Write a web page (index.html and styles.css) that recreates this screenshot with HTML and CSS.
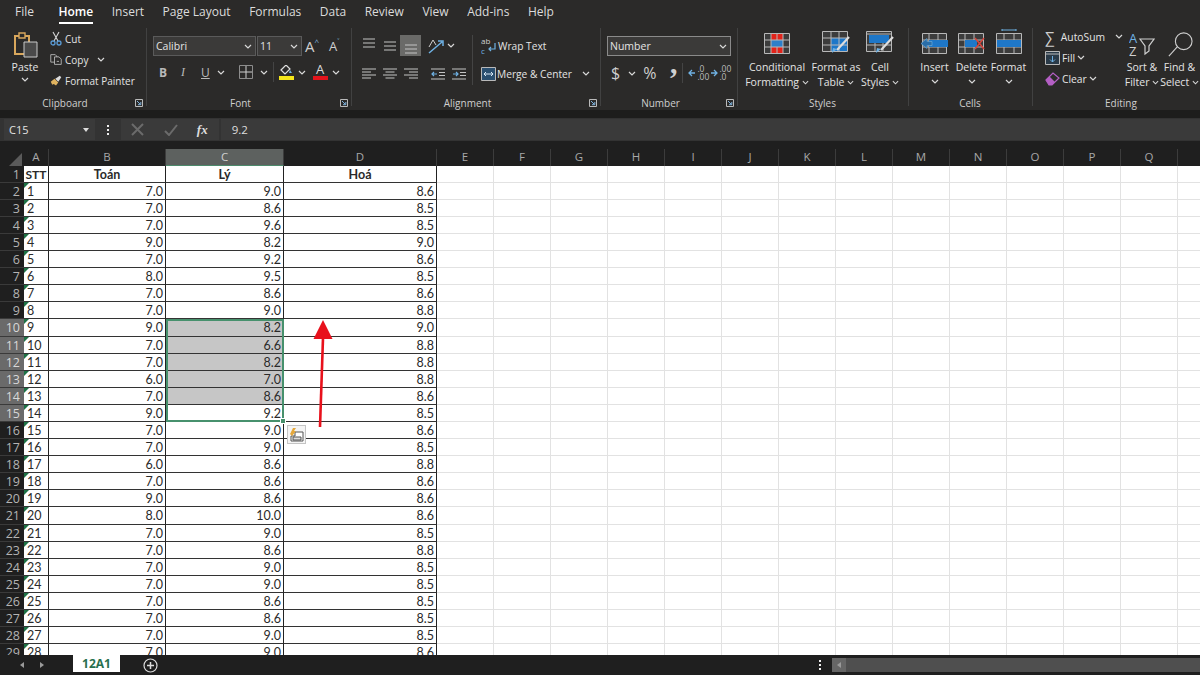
FILE: index.html
```html
<!DOCTYPE html>
<html lang="en">
<head>
  <meta charset="UTF-8">
  <title>Excel</title>
  <link rel="stylesheet" href="styles.css">
</head>
<body>
  <svg class="defs" width="0" height="0">
    <symbol id="chev" viewBox="0 0 8 5"><path d="M1 1l3 3 3-3" fill="none" stroke="#d8d8d8" stroke-width="1.2"/></symbol>
    <symbol id="launch" viewBox="0 0 8 8"><path d="M.5.5h7v7h-7z" fill="none" stroke="#bbb"/><path d="M2 2l3.5 3.5M3 5.7h2.8V3" fill="none" stroke="#7fb2dc"/></symbol>
    <symbol id="lines" viewBox="0 0 14 10"><path d="M1 1h12M1 5h12M1 9h12" stroke="#c4c4c4"/></symbol>
    <symbol id="left" viewBox="0 0 14 12"><path d="M0 1h14M0 4h9M0 7h14M0 10h9" stroke="#c4c4c4" stroke-width="1.100"/></symbol>
    <symbol id="center" viewBox="0 0 14 12"><path d="M0 1h14M2.500 4h9M0 7h14M2.500 10h9" stroke="#c4c4c4" stroke-width="1.100"/></symbol>
    <symbol id="right" viewBox="0 0 14 12"><path d="M0 1h14M5 4h9M0 7h14M5 10h9" stroke="#c4c4c4" stroke-width="1.100"/></symbol>
  </svg>

  <nav class="tabs">
    <span class="tab-file">File</span><span class="tab-active">Home</span><span>Insert</span><span>Page Layout</span><span>Formulas</span><span>Data</span><span>Review</span><span>View</span><span>Add-ins</span><span>Help</span>
  </nav>

  <section class="ribbon">
    <div class="group g-clipboard">
      <div class="group-body clip-body">
        <div class="paste">
          <svg width="25" height="26" viewBox="0 0 25 26"><path d="M2 4h14v18H2z" fill="#2b2a29" stroke="#d9a75c" stroke-width="2"/><path d="M6 1h6v5H6z" fill="#2b2a29" stroke="#d9a75c" stroke-width="1.400"/><path d="M11 10h13v15H11z" fill="#4a4a4a" stroke="#c9c9c9"/></svg>
          <span>Paste</span>
          <svg class="chev" width="8" height="5"><use href="#chev"/></svg>
        </div>
        <div class="clip-list">
          <div class="clip-row"><svg width="12" height="15" viewBox="0 0 12 15"><path d="M3 1l5 9M9 1l-5 9" stroke="#d5d5d5" stroke-width="1.100"/><circle cx="3" cy="12" r="2" fill="none" stroke="#5a9bd5" stroke-width="1.300"/><circle cx="9" cy="12" r="2" fill="none" stroke="#5a9bd5" stroke-width="1.300"/></svg><span>Cut</span></div>
          <div class="clip-row"><svg width="16" height="15" viewBox="0 0 16 15"><path d="M1 1h6l2 2v8H1z" fill="none" stroke="#cfcfcf"/><path d="M6 4h6l3 3v7H6z" fill="#2c2b2a" stroke="#cfcfcf"/><path d="M9 10h3" stroke="#cfcfcf"/></svg><span>Copy</span><svg class="chev copy-chev" width="8" height="5"><use href="#chev"/></svg></div>
          <div class="clip-row"><svg width="16" height="15" viewBox="0 0 16 15"><path d="M1 9l5-4 5 5-3 4-3-2-2 1z" fill="#e0b35f"/><path d="M7 5l4 4 4-6-2-2z" fill="#ddd"/></svg><span>Format Painter</span></div>
        </div>
      </div>
      <div class="group-label has-launcher">Clipboard<svg class="launcher" width="8" height="8"><use href="#launch"/></svg></div>
    </div>

    <div class="group g-font">
      <div class="group-body stack">
        <div class="tool-row font-top">
          <div class="combo combo-font"><span>Calibri</span><svg width="8" height="5"><use href="#chev"/></svg></div>
          <div class="combo combo-size"><span>11</span><svg width="8" height="5"><use href="#chev"/></svg></div>
          <span class="grow">A<small>^</small></span>
          <span class="shrink">A<small>˅</small></span>
        </div>
        <div class="tool-row font-bottom">
          <b class="ico-b">B</b>
          <i class="ico-i">I</i>
          <u class="ico-u">U</u>
          <svg class="chev-a" width="8" height="5"><use href="#chev"/></svg>
          <svg class="ico-border" width="14" height="14" viewBox="0 0 14 14"><path d="M.5.5h13v13H.5z" fill="none" stroke="#8d8d8d"/><path d="M7 1v12M1 7h12" stroke="#cfcfcf"/></svg>
          <svg class="chev-a" width="8" height="5"><use href="#chev"/></svg>
          <span class="sep sep-font"></span>
          <span class="color-btn">
            <svg width="16" height="10" viewBox="0 0 16 10"><path d="M3 5l5-5 4 4-5 5z" fill="none" stroke="#ddd" stroke-width="1.200"/><path d="M12 5l2 3h-3z" fill="#6fb1e3"/></svg>
            <span class="swatch swatch-yellow"></span>
          </span>
          <svg class="chev-a" width="8" height="5"><use href="#chev"/></svg>
          <span class="color-btn text-color">
            <span>A</span>
            <span class="swatch swatch-red"></span>
          </span>
          <svg class="chev-a" width="8" height="5"><use href="#chev"/></svg>
        </div>
      </div>
      <div class="group-label has-launcher">Font<svg class="launcher" width="8" height="8"><use href="#launch"/></svg></div>
    </div>

    <div class="group g-align">
      <div class="group-body align-body">
        <div class="align-grid">
          <div class="tool-row align-row">
            <span class="align-btn high"><svg width="14" height="10"><use href="#lines"/></svg></span>
            <span class="align-btn nudge"><svg width="14" height="10"><use href="#lines"/></svg></span>
            <span class="align-btn align-on low"><svg width="14" height="10"><use href="#lines"/></svg></span>
            <svg class="orient" width="18" height="16" viewBox="0 0 18 16"><path d="M2 9l4-7 3 5" fill="none" stroke="#cfcfcf"/><path d="M2 15L15 4M11 3h5v5" fill="none" stroke="#6fb1e3" stroke-width="1.500"/></svg>
            <svg width="8" height="5"><use href="#chev"/></svg>
          </div>
          <div class="tool-row align-row">
            <span class="align-btn"><svg width="14" height="12"><use href="#left"/></svg></span>
            <span class="align-btn"><svg width="14" height="12"><use href="#center"/></svg></span>
            <span class="align-btn"><svg width="14" height="12"><use href="#right"/></svg></span>
            <span class="indent-pair">
              <svg width="14" height="12" viewBox="0 0 14 12"><path d="M0 1h14M8 4.500h6M8 7.500h6M0 11h14" stroke="#c4c4c4"/><path d="M6 6H1M3 4L1 6l2 2" fill="none" stroke="#6fb1e3" stroke-width="1.200"/></svg>
              <svg width="14" height="12" viewBox="0 0 14 12"><path d="M0 1h14M8 4.500h6M8 7.500h6M0 11h14" stroke="#c4c4c4"/><path d="M1 6h5M4 4l2 2-2 2" fill="none" stroke="#6fb1e3" stroke-width="1.200"/></svg>
            </span>
          </div>
        </div>
        <span class="sep sep-tall"></span>
        <div class="wrap-col">
          <div class="wrap-row"><svg width="16" height="18" viewBox="0 0 16 18"><text x="0" y="7" class="mini">ab</text><text x="0" y="17" class="mini mini-blue">c</text><path d="M14 6v6H8M10 10l-2 2 2 2" fill="none" stroke="#6fb1e3" stroke-width="1.200"/></svg><span>Wrap Text</span></div>
          <div class="wrap-row"><svg width="15" height="14" viewBox="0 0 15 14"><path d="M.5.500h14v13H.5z" fill="#2a4f70" stroke="#b9b9b9"/><path d="M3 7h9M5 5L3 7l2 2M10 5l2 2-2 2" fill="none" stroke="#d9e9f6"/></svg><span>Merge &amp; Center</span><svg class="merge-chev" width="8" height="5"><use href="#chev"/></svg></div>
        </div>
      </div>
      <div class="group-label has-launcher">Alignment<svg class="launcher" width="8" height="8"><use href="#launch"/></svg></div>
    </div>

    <div class="group g-number">
      <div class="group-body stack">
        <div class="tool-row number-top">
          <div class="combo combo-number"><span>Number</span><svg width="8" height="5"><use href="#chev"/></svg></div>
        </div>
        <div class="tool-row number-bottom">
          <span class="num-sym dollar">$</span>
          <svg class="dollar-chev" width="8" height="5"><use href="#chev"/></svg>
          <span class="num-sym percent">%</span>
          <span class="num-sym comma">’</span>
          <span class="sep sep-num"></span>
          <span class="dec-btn">
            <svg width="8" height="10" viewBox="0 0 8 10"><path d="M7 5H1M4 2L1 5l3 3" fill="none" stroke="#6fb1e3" stroke-width="1.300"/></svg>
            <span>.0<br>.00</span>
          </span>
          <span class="dec-btn">
            <svg width="8" height="10" viewBox="0 0 8 10"><path d="M1 5h6M4 2l3 3-3 3" fill="none" stroke="#6fb1e3" stroke-width="1.300"/></svg>
            <span>.00<br>.0</span>
          </span>
        </div>
      </div>
      <div class="group-label has-launcher">Number<svg class="launcher" width="8" height="8"><use href="#launch"/></svg></div>
    </div>

    <div class="group g-styles">
      <div class="group-body big-row">
        <div class="big-btn w-cond">
          <svg width="26" height="21" viewBox="0 0 26 21"><path d="M.5.500h25v20H.5z" fill="#3c3c3c" stroke="#b8b8b8"/><path d="M7 1h12v6H7zM7 14h12v6H7z" fill="#e2231a"/><path d="M7 7h12v7H7z" fill="#2d7fc9"/><path d="M7 1v19M13 1v6M13 14v6M19 1v19M1 7h24M1 14h24" stroke="#b8b8b8"/></svg>
          <span>Conditional<br>Formatting <svg width="7" height="5"><use href="#chev"/></svg></span>
        </div>
        <div class="big-btn w-table">
          <svg width="28" height="23" viewBox="0 0 28 23"><path d="M.5.500h25v20H.5z" fill="#3c3c3c" stroke="#b8b8b8"/><path d="M9 7h16v13H9z" fill="#1e77c8"/><path d="M9 1v19M17 1v19M1 7h24M1 14h24" stroke="#b8b8b8"/><path d="M27 6L15 19" stroke="#ddd" stroke-width="2.200"/><path d="M15 18l-5 4 1-5z" fill="#6fb1e3"/></svg>
          <span>Format as<br>Table <svg width="7" height="5"><use href="#chev"/></svg></span>
        </div>
        <div class="big-btn w-cell">
          <svg width="28" height="23" viewBox="0 0 28 23"><path d="M.5.500h25v20H.5z" fill="#3c3c3c" stroke="#b8b8b8"/><path d="M3 4h20v8H3z" fill="#1e77c8"/><path d="M1 3h24M9 12v8M17 12v8M1 14h24" stroke="#b8b8b8"/><path d="M27 6L15 19" stroke="#ddd" stroke-width="2.200"/><path d="M15 18l-5 4 1-5z" fill="#6fb1e3"/></svg>
          <span>Cell<br>Styles <svg width="7" height="5"><use href="#chev"/></svg></span>
        </div>
      </div>
      <div class="group-label">Styles</div>
    </div>

    <div class="group g-cells">
      <div class="group-body big-row">
        <div class="big-btn w-ins">
          <svg width="28" height="21" viewBox="0 0 28 21"><path d="M1.500.500h24v20h-24z" fill="#3c3c3c" stroke="#b8b8b8"/><path d="M8 1v19M17 1v19M1 7h25M1 14h25" stroke="#b8b8b8"/><path d="M8 7h19v7H8z" fill="#1e77c8"/><path d="M0 10.500l6-5v3h5v4H6v3z" fill="#2a6ea8" stroke="#6fb1e3" stroke-width=".6"/></svg>
          <span>Insert</span>
          <svg width="8" height="5"><use href="#chev"/></svg>
        </div>
        <div class="big-btn w-del">
          <svg width="27" height="21" viewBox="0 0 27 21"><path d="M.5.500h25v20H.5z" fill="#3c3c3c" stroke="#b8b8b8"/><path d="M7 1v19M16 1v19M1 7h24M1 14h24" stroke="#b8b8b8"/><path d="M7 7h12v7H7z" fill="#1e77c8"/><path d="M17 5l9 11M26 5l-9 11" stroke="#d8453c" stroke-width="1.500"/></svg>
          <span>Delete</span>
          <svg width="8" height="5"><use href="#chev"/></svg>
        </div>
        <div class="big-btn w-fmt">
          <svg width="26" height="25" viewBox="0 0 26 25"><path d="M6 1h14M6 0v2M20 0v2" stroke="#6fb1e3"/><path d="M.5 4.500h25v20H.5z" fill="#3c3c3c" stroke="#b8b8b8"/><path d="M8 5v19M18 5v19M1 11h24M1 18h24" stroke="#b8b8b8"/><path d="M1 11h24v7H1z" fill="#1e77c8"/></svg>
          <span>Format</span>
          <svg width="8" height="5"><use href="#chev"/></svg>
        </div>
      </div>
      <div class="group-label">Cells</div>
    </div>

    <div class="group g-edit">
      <div class="group-body big-row edit-body">
        <div class="edit-list">
          <div class="edit-row"><span class="sigma">∑</span><span class="edit-auto">AutoSum</span><svg width="8" height="5"><use href="#chev"/></svg></div>
          <div class="edit-row"><svg width="15" height="14" viewBox="0 0 15 14"><path d="M.5.500h14v13H.5z" fill="#2a3a48" stroke="#b9b9b9"/><path d="M1 3h13" stroke="#b9b9b9"/><path d="M7.500 5v6M5 8.500l2.500 2.500L10 8.500" fill="none" stroke="#6fb1e3"/></svg><span>Fill</span><svg width="8" height="5"><use href="#chev"/></svg></div>
          <div class="edit-row"><svg width="15" height="14" viewBox="0 0 15 14"><path d="M1 8l7-7 6 5-7 7H4z" fill="#2c2b2a" stroke="#b45fc4" stroke-width="1.200"/><path d="M1 8l3.500-3.500L10 10l-3 3H4z" fill="#b45fc4"/></svg><span>Clear</span><svg width="8" height="5"><use href="#chev"/></svg></div>
        </div>
        <div class="big-btn w-sort">
          <svg class="drop" width="26" height="25" viewBox="0 0 26 25"><text x="0" y="11" class="sort-a">A</text><text x="0" y="24" class="sort-z">Z</text><path d="M11 7h14l-5 7v5l-4 3v-8z" fill="none" stroke="#cfcfcf" stroke-width="1.200"/></svg>
          <span>Sort &amp;<br>Filter <svg width="7" height="5"><use href="#chev"/></svg></span>
        </div>
        <div class="big-btn w-find">
          <svg class="drop" width="26" height="25" viewBox="0 0 28 27"><circle cx="18" cy="10" r="9" fill="none" stroke="#cfcfcf" stroke-width="1.200"/><path d="M11 16L2 26" stroke="#cfcfcf" stroke-width="1.200"/></svg>
          <span>Find &amp;<br>Select <svg width="7" height="5"><use href="#chev"/></svg></span>
        </div>
      </div>
      <div class="group-label label-edit">Editing</div>
    </div>
  </section>

  <div class="band"></div>

  <div class="formula-bar">
    <div class="name-box"><span>C15</span><i class="caret"></i></div>
    <span class="dots"><i></i><i></i><i></i></span>
    <div class="fx-box">
      <svg width="13" height="13" viewBox="0 0 13 13"><path d="M1 1l11 11M12 1L1 12" stroke="#6b6b6b" stroke-width="2"/></svg>
      <svg width="14" height="12" viewBox="0 0 14 12"><path d="M1 7l4 4 8-10" fill="none" stroke="#6b6b6b" stroke-width="2"/></svg>
      <span class="fx">fx</span>
    </div>
    <div class="formula-input">9.2</div>
  </div>

  <div class="col-heads">
    <div class="corner"><i></i></div>
    <span class="col-a">A</span><span class="col-b">B</span><span class="col-c col-on">C</span><span class="col-d">D</span>
    <span class="col-e">E</span><span class="col-e">F</span><span class="col-e">G</span><span class="col-e">H</span><span class="col-e">I</span><span class="col-e">J</span><span class="col-e">K</span><span class="col-e">L</span><span class="col-e">M</span><span class="col-e">N</span><span class="col-e">O</span><span class="col-e">P</span><span class="col-e">Q</span>
  </div>

  <main class="sheet">
    <div class="row row-title"><span class="rh">1</span><span class="c a">STT</span><span class="c b">Toán</span><span class="c cc">Lý</span><span class="c d">Hoá</span><span class="rest"></span></div>
    <div class="row"><span class="rh">2</span><span class="c a">1</span><span class="c b">7.0</span><span class="c cc">9.0</span><span class="c d">8.6</span><span class="rest"></span></div>
    <div class="row"><span class="rh">3</span><span class="c a">2</span><span class="c b">7.0</span><span class="c cc">8.6</span><span class="c d">8.5</span><span class="rest"></span></div>
    <div class="row"><span class="rh">4</span><span class="c a">3</span><span class="c b">7.0</span><span class="c cc">9.6</span><span class="c d">8.5</span><span class="rest"></span></div>
    <div class="row"><span class="rh">5</span><span class="c a">4</span><span class="c b">9.0</span><span class="c cc">8.2</span><span class="c d">9.0</span><span class="rest"></span></div>
    <div class="row"><span class="rh">6</span><span class="c a">5</span><span class="c b">7.0</span><span class="c cc">9.2</span><span class="c d">8.6</span><span class="rest"></span></div>
    <div class="row"><span class="rh">7</span><span class="c a">6</span><span class="c b">8.0</span><span class="c cc">9.5</span><span class="c d">8.5</span><span class="rest"></span></div>
    <div class="row"><span class="rh">8</span><span class="c a">7</span><span class="c b">7.0</span><span class="c cc">8.6</span><span class="c d">8.6</span><span class="rest"></span></div>
    <div class="row"><span class="rh">9</span><span class="c a">8</span><span class="c b">7.0</span><span class="c cc">9.0</span><span class="c d">8.8</span><span class="rest"></span></div>
    <div class="row row-sel"><span class="rh">10</span><span class="c a">9</span><span class="c b">9.0</span><span class="c cc">8.2</span><span class="c d">9.0</span><span class="rest"></span></div>
    <div class="row row-sel"><span class="rh">11</span><span class="c a">10</span><span class="c b">7.0</span><span class="c cc">6.6</span><span class="c d">8.8</span><span class="rest"></span></div>
    <div class="row row-sel"><span class="rh">12</span><span class="c a">11</span><span class="c b">7.0</span><span class="c cc">8.2</span><span class="c d">8.8</span><span class="rest"></span></div>
    <div class="row row-sel"><span class="rh">13</span><span class="c a">12</span><span class="c b">6.0</span><span class="c cc">7.0</span><span class="c d">8.8</span><span class="rest"></span></div>
    <div class="row row-sel"><span class="rh">14</span><span class="c a">13</span><span class="c b">7.0</span><span class="c cc">8.6</span><span class="c d">8.6</span><span class="rest"></span></div>
    <div class="row row-sel row-active"><span class="rh">15</span><span class="c a">14</span><span class="c b">9.0</span><span class="c cc">9.2</span><span class="c d">8.5</span><span class="rest"></span></div>
    <div class="row"><span class="rh">16</span><span class="c a">15</span><span class="c b">7.0</span><span class="c cc">9.0</span><span class="c d">8.6</span><span class="rest"></span></div>
    <div class="row"><span class="rh">17</span><span class="c a">16</span><span class="c b">7.0</span><span class="c cc">9.0</span><span class="c d">8.5</span><span class="rest"></span></div>
    <div class="row"><span class="rh">18</span><span class="c a">17</span><span class="c b">6.0</span><span class="c cc">8.6</span><span class="c d">8.8</span><span class="rest"></span></div>
    <div class="row"><span class="rh">19</span><span class="c a">18</span><span class="c b">7.0</span><span class="c cc">8.6</span><span class="c d">8.6</span><span class="rest"></span></div>
    <div class="row"><span class="rh">20</span><span class="c a">19</span><span class="c b">9.0</span><span class="c cc">8.6</span><span class="c d">8.6</span><span class="rest"></span></div>
    <div class="row"><span class="rh">21</span><span class="c a">20</span><span class="c b">8.0</span><span class="c cc">10.0</span><span class="c d">8.6</span><span class="rest"></span></div>
    <div class="row"><span class="rh">22</span><span class="c a">21</span><span class="c b">7.0</span><span class="c cc">9.0</span><span class="c d">8.5</span><span class="rest"></span></div>
    <div class="row"><span class="rh">23</span><span class="c a">22</span><span class="c b">7.0</span><span class="c cc">8.6</span><span class="c d">8.8</span><span class="rest"></span></div>
    <div class="row"><span class="rh">24</span><span class="c a">23</span><span class="c b">7.0</span><span class="c cc">9.0</span><span class="c d">8.5</span><span class="rest"></span></div>
    <div class="row"><span class="rh">25</span><span class="c a">24</span><span class="c b">7.0</span><span class="c cc">9.0</span><span class="c d">8.5</span><span class="rest"></span></div>
    <div class="row"><span class="rh">26</span><span class="c a">25</span><span class="c b">7.0</span><span class="c cc">8.6</span><span class="c d">8.5</span><span class="rest"></span></div>
    <div class="row"><span class="rh">27</span><span class="c a">26</span><span class="c b">7.0</span><span class="c cc">8.6</span><span class="c d">8.5</span><span class="rest"></span></div>
    <div class="row"><span class="rh">28</span><span class="c a">27</span><span class="c b">7.0</span><span class="c cc">9.0</span><span class="c d">8.5</span><span class="rest"></span></div>
    <div class="row"><span class="rh">29</span><span class="c a">28</span><span class="c b">7.0</span><span class="c cc">9.0</span><span class="c d">8.6</span><span class="rest"></span></div>

    <!-- things lying over the cells -->
    <div class="selection"><i class="handle"></i></div>
    <div class="paste-opts">
      <svg width="16" height="15" viewBox="0 0 16 15"><path d="M6 5h8v9H2V9h4z" fill="#fff" stroke="#555"/><path d="M4 10h8v3H4z" fill="#ddd" stroke="#555"/><path d="M1 7l3-6h3L5 4h2L3 9z" fill="#e5a83c"/></svg>
    </div>
    <svg class="arrow" width="24" height="108" viewBox="0 0 24 108"><path d="M12 18L9 107" stroke="#e8111c" stroke-width="2.600" fill="none"/><path d="M12 0l9.500 19h-19z" fill="#e8111c"/></svg>
  </main>

  <footer class="sheet-bar">
    <div class="nav-arrows"><i class="tri-l"></i><i class="tri-r"></i></div>
    <div class="sheet-tab">12A1</div>
    <svg class="add-sheet" width="15" height="15" viewBox="0 0 15 15"><circle cx="7.500" cy="7.500" r="6.500" fill="none" stroke="#ddd" stroke-width="1.200"/><path d="M7.500 4v7M4 7.500h7" stroke="#ddd" stroke-width="1.500"/></svg>
    <span class="dots dots-bar"><i></i><i></i><i></i></span>
    <div class="hscroll"><span class="hscroll-btn"><i class="tri-l tri-grey"></i></span></div>
  </footer>
</body>
</html>
```

FILE: styles.css
```css
* {
  box-sizing: border-box;
}

body {
  margin: 0;
  width: 1200px;
  height: 675px;
  overflow: hidden;
  display: flex;
  flex-direction: column;
  background: #2b2a29;
  color: #e4e4e4;
  font-family: "Open Sans", "Noto Sans", sans-serif;
  font-size: 11px;
}

.defs {
  position: absolute;
}

svg {
  display: block;
  flex: none;
}

/* tab strip */
.tabs {
  height: 24px;
  flex: none;
  display: flex;
  gap: 18.500px;
  padding: 3px 0 0 15px;
  font-size: 12px;
  line-height: 17px;
  color: #dcdcdc;
}

.tab-file {
  margin-right: 6px;
}

.tab-active {
  height: 21px;
  border-bottom: 2px solid #fff;
  color: #fff;
  font-weight: 600;
}

/* ribbon */
.ribbon {
  height: 86px;
  flex: none;
  display: flex;
}

.group {
  position: relative;
  display: flex;
  flex-direction: column;
  flex: none;
}

.group + .group::before {
  content: "";
  position: absolute;
  left: 0;
  top: 4px;
  bottom: 4px;
  width: 1px;
  background: #414141;
}

.group-body {
  flex: 1;
  min-height: 0;
}

.group-label {
  height: 14px;
  position: relative;
  text-align: center;
  font-size: 10px;
  line-height: 15px;
  color: #cfcfcf;
}

.has-launcher {
  padding-right: 16px;
}

.label-edit {
  padding-left: 10px;
}

.launcher {
  position: absolute;
  right: 3px;
  top: 3px;
}

.g-clipboard { width: 146px; }
.g-font { width: 205px; }
.g-align { width: 249px; }
.g-number { width: 137px; }
.g-styles { width: 171px; }
.g-cells { width: 124px; }
.g-edit { width: 168px; }

.clip-body {
  display: flex;
}

.paste {
  width: 50px;
  display: flex;
  flex-direction: column;
  align-items: center;
  padding-top: 8px;
  font-size: 10.500px;
  line-height: 14px;
}

.paste span {
  margin-top: 2px;
}

.paste .chev {
  margin-top: 3px;
}

.clip-list {
  padding-top: 4px;
}

.clip-row {
  height: 21px;
  display: flex;
  align-items: center;
  gap: 3px;
  font-size: 10px;
  white-space: nowrap;
}

.clip-row svg:first-child {
  width: 12px;
}

.copy-chev {
  margin-left: 6px;
}

.stack {
  padding-top: 12px;
}

.tool-row {
  display: flex;
  align-items: center;
}

.combo {
  height: 20px;
  display: flex;
  align-items: center;
  justify-content: space-between;
  padding: 0 3px 0 2px;
  background: #3b3a39;
  border: 1px solid #5a5a5a;
  font-size: 10.500px;
}

.font-top {
  padding-left: 7px;
  height: 20px;
}

.combo-font {
  width: 103px;
}

.combo-size {
  width: 45px;
  margin-left: 1px;
}

.grow,
.shrink {
  color: #cfcfcf;
  display: flex;
  line-height: 18px;
}

.grow {
  margin-left: 3px;
  font-size: 15px;
}

.shrink {
  margin-left: 10px;
  font-size: 13px;
}

.grow small,
.shrink small {
  font-size: 8px;
  line-height: 10px;
  color: #7fb2dc;
}

.font-bottom {
  height: 20px;
  margin-top: 6px;
  padding-left: 13px;
  color: #b9b9b9;
  font-size: 12px;
}

.ico-b { width: 8px; }
.ico-i { width: 6px; margin-left: 14px; font-family: "Liberation Serif", serif; }
.ico-u { width: 9px; margin-left: 14px; }
.chev-a { margin-left: 7px; }
.ico-border { margin-left: 14px; }

.sep {
  width: 1px;
  background: #444;
  flex: none;
}

.sep-font {
  height: 20px;
  margin: 0 4px 0 5px;
}

.color-btn {
  width: 16px;
  display: flex;
  flex-direction: column;
  align-items: center;
  line-height: 11px;
}

.color-btn + .chev-a {
  margin-left: 4px;
  margin-right: 6px;
}

.swatch {
  width: 15px;
  height: 4px;
  margin-top: 1px;
}

.swatch-yellow { background: #f4e61b; }
.swatch-red { background: #e3141c; }
.text-color { color: #ddd; font-size: 13px; }

.align-body {
  display: flex;
  padding-top: 11px;
}

.align-grid {
  width: 121px;
  padding-left: 7px;
}

.align-row {
  height: 21px;
  margin-bottom: 7px;
}

.align-btn {
  width: 21px;
  height: 21px;
  display: flex;
  justify-content: center;
  align-items: center;
}

.high svg {
  margin-top: -6px;
}

.align-on {
  background: #6a6a68;
}

.low svg {
  margin-top: 6px;
}

.orient {
  margin: 0 2px 0 6px;
}

.indent-pair {
  display: flex;
  gap: 7px;
  margin-left: 10px;
}

.sep-tall {
  height: 50px;
}

.wrap-col {
  padding-left: 8px;
}

.wrap-row {
  height: 21px;
  margin-bottom: 7px;
  display: flex;
  align-items: center;
  gap: 1px;
  font-size: 10.200px;
  white-space: nowrap;
}

.mini {
  font-size: 8px;
  fill: #cfcfcf;
}

.mini-blue {
  fill: #6fb1e3;
}

.merge-chev {
  margin-left: 9px;
}

.number-top {
  padding-left: 7px;
  height: 20px;
}

.combo-number {
  width: 124px;
  border-color: #8a8a8a;
}

.number-bottom {
  height: 22px;
  margin-top: 6px;
  padding-left: 11px;
  color: #cfcfcf;
}

.num-sym {
  font-size: 16px;
  line-height: 22px;
}

.dollar-chev {
  margin-left: 8px;
}

.percent {
  margin-left: 7px;
}

.comma {
  width: 8px;
  margin-left: 12px;
  font-family: "Liberation Serif", serif;
  font-size: 30px;
  font-weight: 700;
  line-height: 32px;
  height: 22px;
}

.sep-num {
  height: 20px;
  margin: 0 5px 0 6px;
}

.dec-btn {
  width: 22px;
  display: flex;
  gap: 1px;
  align-items: center;
  font-size: 8.500px;
  line-height: 8px;
  color: #bdbdbd;
}

/* big buttons: icon track ends at the same line in every button */
.big-row {
  display: flex;
  padding-top: 9px;
}

.big-btn {
  display: grid;
  grid-template-rows: 21px auto auto;
  grid-template-columns: 100%;
  align-content: start;
  justify-items: center;
  font-size: 10.500px;
  line-height: 15px;
  text-align: center;
  white-space: nowrap;
  flex: none;
}

.big-btn > svg:first-child {
  align-self: end;
}

.big-btn span {
  margin-top: 5.500px;
}

.big-btn span svg {
  display: inline-block;
  vertical-align: 1px;
}

.big-btn > svg:last-child {
  margin-top: 4px;
}

.big-btn > svg.drop {
  margin: 0 0 -3px;
}

.w-cond { width: 78px; margin-left: 1px; }
.w-table { width: 46px; margin-left: -3px; }
.w-cell { width: 42px; }
.w-ins { width: 37px; margin-left: 8px; }
.w-del { width: 37px; }
.w-fmt { width: 37px; }
.w-sort { width: 38px; }
.w-find { width: 37px; }

.sort-a {
  font-size: 13px;
  fill: #6fb1e3;
}

.sort-z {
  font-size: 13px;
  fill: #cfcfcf;
}

.edit-body {
  padding-left: 13px;
}

.edit-list {
  width: 78px;
  margin-top: -7px;
}

.edit-row {
  height: 21px;
  display: flex;
  align-items: center;
  gap: 2px;
  font-size: 10.300px;
}

.sigma {
  width: 15px;
  font-size: 15px;
  color: #cfcfcf;
  line-height: 20px;
}

.edit-auto {
  margin-right: 8px;
}

/* formula bar */
.band {
  height: 8px;
  flex: none;
  background: #1d1d1c;
}

.formula-bar {
  height: 23px;
  flex: none;
  display: flex;
  align-items: flex-start;
  padding-top: 1px;
  background: #333;
}

.name-box {
  width: 91px;
  height: 21px;
  margin-left: 4px;
  display: flex;
  align-items: center;
  justify-content: space-between;
  padding: 0 6px 0 5px;
  background: #3a3a3a;
  font-size: 11px;
}

.caret {
  border: 3.500px solid transparent;
  border-top: 4px solid #ddd;
  border-bottom: 0;
}

.dots {
  width: 26px;
  height: 21px;
  display: flex;
  flex-direction: column;
  justify-content: center;
  align-items: center;
  gap: 2px;
}

.dots i {
  width: 2px;
  height: 2px;
  background: #eee;
}

.fx-box {
  width: 98px;
  height: 21px;
  display: flex;
  align-items: center;
  gap: 20px;
  padding-left: 10px;
  background: #3a3a3a;
}

.fx {
  font-family: "Liberation Serif", serif;
  font-style: italic;
  font-weight: 700;
  font-size: 13px;
  margin-left: -1px;
  color: #ddd;
}

.formula-input {
  width: 981px;
  height: 21px;
  margin-left: 2px;
  padding-left: 11px;
  background: #3a3a3a;
  font-size: 11.500px;
  line-height: 21px;
  color: #ddd;
}

/* column headers */
.col-heads {
  height: 24.600px;
  flex: none;
  display: flex;
  padding-top: 8px;
  background: #1f1f1f;
  color: #a8a8a8;
  font-size: 11.500px;
  line-height: 16px;
  text-align: center;
}

.corner {
  width: 24px;
  position: relative;
}

.corner i {
  position: absolute;
  right: 2px;
  bottom: 0;
  border-style: solid;
  border-width: 0 0 13px 13px;
  border-color: transparent transparent #5a5a5a transparent;
}

.col-heads span {
  flex: none;
  border-right: 1px solid #3c3c3c;
}

.col-a { width: 25px; }
.col-b { width: 117px; }
.col-c { width: 118px; }
.col-d { width: 153px; }
.col-e { width: 57px; }

.col-heads .col-on {
  background: #5d615f;
  color: #cfcfcf;
  border-bottom: 1px solid #4d8a6c;
}

/* cells */
.sheet {
  flex: none;
  height: 489.400px;
  position: relative;
  overflow: hidden;
  background: #fff;
}

.row {
  height: 17.100px;
  display: flex;
  color: #2a2a2a;
  font-family: Lato, "Open Sans", sans-serif;
  font-size: 12.500px;
  line-height: 18px;
}

.rh {
  width: 24px;
  flex: none;
  padding-right: 4px;
  background: #1f1f1f;
  border-bottom: 1px solid #3a3a3a;
  color: #b4b4b4;
  font-family: "Open Sans", sans-serif;
  font-size: 12.500px;
  text-align: right;
}

.row-sel .rh {
  background: #6a6a6a;
  color: #d8d8d8;
}

.c {
  flex: none;
  padding: 0 2px;
  border-right: 1px solid #222;
  border-bottom: 1px solid #333;
  text-align: right;
}

.a {
  width: 25px;
  position: relative;
  padding-left: 3px;
  text-align: left;
}

.row:not(.row-title) .a::before {
  content: "";
  position: absolute;
  left: 0;
  top: 0;
  border-style: solid;
  border-width: 5px 5px 0 0;
  border-color: #1e7145 transparent transparent transparent;
}

.b { width: 117px; }
.cc { width: 118px; }
.d { width: 153px; }

.rest {
  flex: 1;
  border-bottom: 1px solid #e2e2e2;
  background: repeating-linear-gradient(90deg, transparent 0 56px, #e2e2e2 56px 57px);
}

.row-title .c {
  font-weight: 700;
  text-align: center;
}

.row-title .a {
  padding: 0;
  font-size: 12px;
}

.row-sel .cc {
  background: #c6c6c6;
  border-right-color: transparent;
}

.row-active .cc {
  background: #fff;
}

.selection {
  position: absolute;
  left: 166px;
  top: 153.900px;
  width: 118px;
  height: 102.600px;
  border: 2px solid #47916d;
  pointer-events: none;
}

.handle {
  position: absolute;
  right: -4px;
  bottom: -4px;
  width: 6px;
  height: 6px;
  background: #47916d;
  border: 1px solid #fff;
}

.paste-opts {
  position: absolute;
  left: 287px;
  top: 259px;
  width: 19px;
  height: 19px;
  display: flex;
  align-items: center;
  justify-content: center;
  background: #f4f4f4;
  border: 1px solid #c4c4c4;
}

.arrow {
  position: absolute;
  left: 311px;
  top: 154px;
}

/* bottom bar */
.sheet-bar {
  flex: 1;
  display: flex;
  align-items: flex-start;
  background: #1f1f1f;
  position: relative;
}

.nav-arrows {
  width: 73px;
  height: 20px;
  display: flex;
  align-items: center;
  gap: 16px;
  padding-left: 20px;
}

.tri-l,
.tri-r {
  border-style: solid;
  border-color: transparent;
}

.tri-l {
  border-width: 3.500px 4px 3.500px 0;
  border-right-color: #9a9a9a;
}

.tri-r {
  border-width: 3.500px 0 3.500px 4px;
  border-left-color: #9a9a9a;
}

.sheet-tab {
  width: 47px;
  height: 17px;
  background: #fff;
  color: #27704e;
  font-weight: 700;
  font-size: 12px;
  line-height: 17px;
  text-align: center;
}

.add-sheet {
  margin: 3px 0 0 23px;
}

.dots-bar {
  height: 20px;
  width: 8px;
  margin-left: 658px;
}

.hscroll {
  width: 368px;
  height: 14px;
  margin: 3px 0 0 8px;
  background: #4f4f4f;
}

.hscroll-btn {
  width: 14px;
  height: 14px;
  display: flex;
  align-items: center;
  justify-content: center;
  background: #666;
}
```
